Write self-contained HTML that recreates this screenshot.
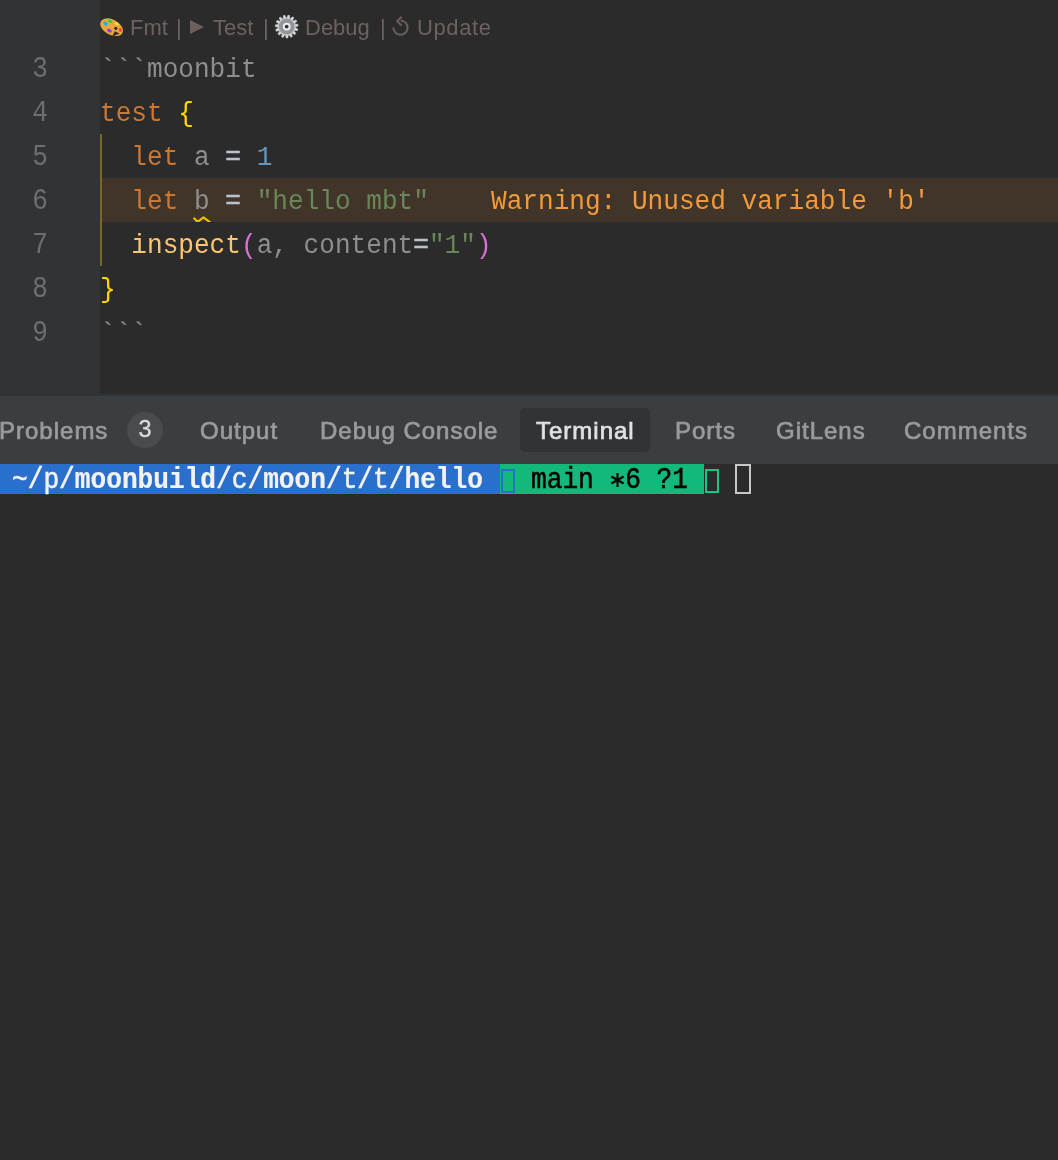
<!DOCTYPE html>
<html><head><meta charset="utf-8">
<style>
html,body{margin:0;padding:0;width:1058px;height:1160px;overflow:hidden;background:#2b2b2b;}
body{position:relative;font-family:"Liberation Sans",sans-serif;}
.code,.ln,.lens,.tab,.tline,#warn,#badge{will-change:transform;}
.abs{position:absolute;}
#gutter{left:0;top:0;width:100px;height:394px;background:#323335;}
.ln{position:absolute;left:0;width:48px;text-align:right;font-family:"Liberation Mono",monospace;font-size:26.1px;color:#6c6f72;height:44px;line-height:44px;transform:scaleY(1.1);transform-origin:0 29px;}
.code{position:absolute;left:99.6px;font-family:"Liberation Mono",monospace;font-size:26.1px;height:44px;line-height:44px;white-space:pre;color:#a9a9a9;transform:scaleY(1.07);transform-origin:0 29px;}
.kw{color:#cc7832}.br{color:#ffd700}.num{color:#6897bb}.str{color:#6a8759}.fn{color:#ffc66d}.par{color:#da70d6}.var{color:#8e8e8e}.op{color:#bcc1ca;-webkit-text-stroke:0.6px currentColor}.dim{color:#8e8e8e}
#hl{left:100px;top:178px;width:958px;height:44px;background:#41352a;}
.guide{position:absolute;left:100px;width:2px;background:#766a22;}
.lens{position:absolute;top:9px;height:38px;line-height:38px;font-size:22px;color:#6d6260;white-space:pre;}
#warn{left:491px;top:180px;height:44px;line-height:44px;font-family:"Liberation Mono",monospace;font-size:26.1px;color:#f29a3a;white-space:pre;transform:scaleY(1.07);transform-origin:0 29px;}
#panelborder{left:0;top:394px;width:1058px;height:2px;background:#303234;}
#tabs{left:0;top:396px;width:1058px;height:68px;background:#3b3e41;}
.tab{position:absolute;top:1px;height:67px;line-height:67px;font-size:24px;color:#9a9b9c;white-space:pre;-webkit-text-stroke:0.7px currentColor;letter-spacing:1px;}
#activetab{left:520px;top:12px;width:130px;height:44px;background:#323335;border-radius:5px;}
#badge{left:127px;top:16px;width:36px;height:36px;border-radius:18px;background:#494b4c;color:#dcdcdc;font-size:23.5px;line-height:34px;text-align:center;-webkit-text-stroke:0.3px currentColor;}
#term{left:0;top:464px;width:1058px;height:696px;background:#2b2b2b;}
.tline{position:absolute;top:465.5px;height:30px;line-height:30px;font-family:"Liberation Mono",monospace;font-size:26.17px;white-space:pre;-webkit-text-stroke:0.5px currentColor;}
.tline b{-webkit-text-stroke:0.2px currentColor;}
.tline{transform:scaleY(1.1);transform-origin:0 22px;}
</style></head><body>
<div id="gutter" class="abs"></div>
<div id="hl" class="abs"></div>
<div class="guide" style="top:134px;height:132px"></div>

<svg class="abs" style="left:0;top:0" width="500" height="46" viewBox="0 0 500 46">
  <g>
    <ellipse cx="111.6" cy="27.2" rx="12.2" ry="7.6" transform="rotate(28 111.6 27.2)" fill="#e9a93a"/>
    <path d="M112.2 36.5 L114.8 31.2 L119.5 33.6 Z" fill="#2b2b2b"/>
    <circle cx="115.8" cy="28.3" r="1.6" fill="#2b2b2b"/>
    <ellipse cx="105.6" cy="23.6" rx="2.4" ry="1.8" transform="rotate(30 105.6 23.6)" fill="#2aa8e8"/>
    <ellipse cx="110.2" cy="21.2" rx="2.2" ry="1.6" transform="rotate(25 110.2 21.2)" fill="#3cc83a"/>
    <ellipse cx="116.6" cy="23.8" rx="2.2" ry="1.3" transform="rotate(25 116.6 23.8)" fill="#f2dc3a"/>
    <ellipse cx="109.4" cy="30.6" rx="2.5" ry="1.7" transform="rotate(25 109.4 30.6)" fill="#9a3ad8"/>
    <ellipse cx="120.4" cy="29.9" rx="1.6" ry="2.0" transform="rotate(-20 120.4 29.9)" fill="#f04a3a"/>
  </g>
  <path d="M190 20 L204 27 L190 34 Z" fill="#6b5e5c"/>
  <polygon points="295.46,27.48 295.40,27.92 297.84,29.01 297.35,30.66 294.71,30.24 294.34,30.96 294.11,31.34 295.90,33.33 294.78,34.64 292.54,33.19 291.91,33.69 291.54,33.95 292.36,36.49 290.81,37.23 289.35,34.99 288.57,35.20 288.14,35.28 287.85,37.94 286.13,37.99 285.71,35.34 284.91,35.22 284.48,35.12 283.14,37.43 281.55,36.77 282.24,34.19 281.56,33.74 281.21,33.48 279.04,35.04 277.86,33.80 279.54,31.72 279.10,31.04 278.89,30.65 276.27,31.20 275.70,29.58 278.08,28.36 277.95,27.56 277.92,27.12 275.30,26.56 275.44,24.85 278.11,24.70 278.32,23.92 278.46,23.50 276.30,21.93 277.12,20.42 279.62,21.37 280.13,20.74 280.44,20.42 279.10,18.10 280.47,17.06 282.36,18.94 283.08,18.58 283.49,18.41 283.22,15.75 284.89,15.35 285.85,17.84 286.66,17.80 287.10,17.81 287.93,15.27 289.62,15.58 289.48,18.25 290.24,18.54 290.64,18.73 292.44,16.75 293.85,17.72 292.64,20.11 293.21,20.68 293.50,21.02 295.95,19.93 296.84,21.40 294.77,23.08 295.06,23.84 295.18,24.26 297.86,24.27 298.08,25.97 295.50,26.67" fill="#d4d7dc" stroke="#d4d7dc" stroke-width="0.6" stroke-linejoin="round"/>
  <circle cx="286.7" cy="26.6" r="8.0" fill="#939598"/>
  <circle cx="286.7" cy="26.6" r="3.9" fill="#eceef2"/>
  <circle cx="286.7" cy="26.6" r="1.9" fill="#333"/>
  <path d="M393.4 27.4 A7.1 7.1 0 1 0 400.6 20.5" fill="none" stroke="#6b5e5c" stroke-width="2"/>
  <path d="M401.2 17.2 L397.2 21.2 L401.0 25.0" fill="none" stroke="#6b5e5c" stroke-width="2" stroke-linecap="round" stroke-linejoin="round"/>
</svg>
<div class="lens" style="left:130px">Fmt</div>
<div class="lens" style="left:176px">|</div>
<div class="lens" style="left:213px">Test</div>
<div class="lens" style="left:263px">|</div>
<div class="lens" style="left:305px">Debug</div>
<div class="lens" style="left:380px">|</div>
<div class="lens" style="left:417px;letter-spacing:0.6px">Update</div>

<div class="ln" style="top:48px">3</div>
<div class="ln" style="top:92px">4</div>
<div class="ln" style="top:136px">5</div>
<div class="ln" style="top:180px">6</div>
<div class="ln" style="top:224px">7</div>
<div class="ln" style="top:268px">8</div>
<div class="ln" style="top:312px">9</div>

<div class="code dim" style="top:48px">```moonbit</div>
<div class="code" style="top:92px"><span class="kw">test</span> <span class="br">{</span></div>
<div class="code" style="top:136px">  <span class="kw">let</span> <span class="var">a</span> <span class="op">=</span> <span class="num">1</span></div>
<div class="code" style="top:180px">  <span class="kw">let</span> <span class="var">b</span> <span class="op">=</span> <span class="str">"hello mbt"</span></div>
<div class="code" style="top:224px">  <span class="fn">inspect</span><span class="par">(</span><span class="var">a</span><span class="var">, content</span><span class="op">=</span><span class="str">"1"</span><span class="par">)</span></div>
<div class="code" style="top:268px"><span class="br">}</span></div>
<div class="code dim" style="top:312px">```</div>
<div id="warn" class="abs">Warning: Unused variable 'b'</div>
<svg class="abs" style="left:190px;top:213px" width="24" height="9" viewBox="0 0 24 9"><path d="M4.3 5.4 L7.6 8.9 L13.5 4.3 L19.8 9.2" fill="none" stroke="#e5c100" stroke-width="2.2" stroke-linejoin="round" stroke-linecap="round"/></svg>

<div id="panelborder" class="abs"></div>
<div id="tabs" class="abs">
  <div id="activetab" class="abs"></div>
  <div class="tab" style="left:-1.5px">Problems</div>
  <div id="badge" class="abs">3</div>
  <div class="tab" style="left:200px">Output</div>
  <div class="tab" style="left:320px">Debug Console</div>
  <div class="tab" style="left:536px;color:#e2e2e2">Terminal</div>
  <div class="tab" style="left:675px">Ports</div>
  <div class="tab" style="left:776px">GitLens</div>
  <div class="tab" style="left:904px">Comments</div>
</div>
<div id="term" class="abs"></div>
<div class="abs" style="left:0;top:464px;width:500px;height:30px;background:#2a6fcc"></div>
<div class="abs" style="left:500px;top:464px;width:204px;height:30px;background:#13b87b"></div>
<div class="tline" style="left:12px;color:#f2f2f2">~/p/<b>moonbuild</b>/c/<b>moon</b>/t/t/<b>hello</b></div>
<div class="abs" style="left:501px;top:469px;width:9.6px;height:20px;border:2px solid #2a6fcc"></div>
<div class="tline" style="left:531px;color:#000">main  6 ?1</div>
<svg class="abs" style="left:608px;top:471px" width="20" height="18" viewBox="0 0 20 18"><g stroke="#000" stroke-width="2.1" stroke-linecap="butt"><path d="M9.5 2 V16"/><path d="M3.4 5.5 L15.6 12.5"/><path d="M3.4 12.5 L15.6 5.5"/></g></svg>
<div class="abs" style="left:705px;top:469px;width:9.6px;height:20px;border:2px solid #19c585"></div>
<div class="abs" style="left:735px;top:464px;width:12px;height:26px;border:2px solid #c8c8c8"></div>
</body></html>
